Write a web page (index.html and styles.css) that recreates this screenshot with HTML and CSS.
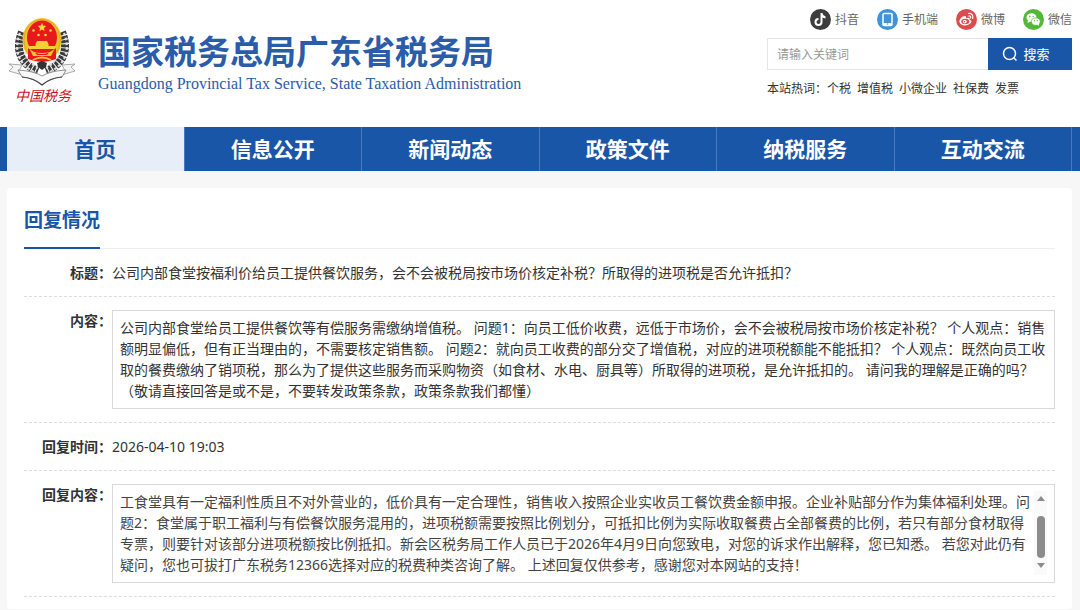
FILE: index.html
```html
<!DOCTYPE html>
<html lang="zh-CN">
<head>
<meta charset="utf-8">
<title>国家税务总局广东省税务局</title>
<link rel="stylesheet" href="styles.css">
</head>
<body>
<header class="header">
  <a class="brand" href="#">
    <span class="logo">
      <svg class="emblem" viewBox="0 0 70 70" aria-hidden="true">
        <g fill="none" stroke="#3a3a3a" stroke-width="8" stroke-dasharray="3.200 1">
          <path d="M14 15C7 32 12 47 30 54"/>
          <path d="M54 15C61 32 56 47 38 54"/>
        </g>
        <g fill="none" stroke="#dedede" stroke-width="2.200" stroke-dasharray="2.800 2">
          <path d="M12 16C5 34 11 48 28 56"/>
          <path d="M56 16C63 34 57 48 40 56"/>
          <path d="M16 30C17 40 22 46 30 51"/>
          <path d="M52 30C51 40 46 46 38 51"/>
        </g>
        <ellipse cx="34" cy="23" rx="19.500" ry="22" fill="#efc52b"/>
        <ellipse cx="34" cy="23" rx="18" ry="20.500" fill="none" stroke="#d99b1c" stroke-width=".7"/>
        <ellipse cx="34" cy="20.500" rx="15" ry="17" fill="#e8191c"/>
        <path d="M20 31h28v11q-14 6-28 0z" fill="#e8191c"/>
        <path d="M34 6l1.200 2.600 2.900.4-2.100 2 .5 2.900-2.500-1.400-2.500 1.400.5-2.900-2.100-2 2.900-.4z" fill="#ffd83b"/>
        <g fill="#ffd83b"><circle cx="25.500" cy="13.500" r="1.300"/><circle cx="42.500" cy="13.500" r="1.300"/><circle cx="30.500" cy="18" r="1.300"/><circle cx="37.500" cy="18" r="1.300"/></g>
        <path d="M29 24h10l1.500 3v2h7v3h-27v-3h7v-2z" fill="#f6cf35"/>
        <path d="M21 31q3 5 13 5t13-5l-4 8H25z" fill="#f3c52e"/>
        <path d="M27 35.500q7 3 14 0l-2 2.500H29z" fill="#e8191c"/>
        <path d="M25 43q9-5 18 0" fill="none" stroke="#f3c52e" stroke-width="2"/>
        <path d="M29 46l5-2 5 2-1 4-4 3-4-3z" fill="#333"/>
        <path d="M1 47l13 1-3 6 7 1v4L1 54l4-4zM67 47l-13 1 3 6-7 1v4l17-5-4-4z" fill="#f4f4f4" stroke="#888" stroke-width=".7"/>
        <path d="M10 53q16 1 24 6 8-5 24-6l-4 7q-12 1-20 8-8-7-20-8z" fill="#f8f8f8" stroke="#777" stroke-width=".8"/>
        <path d="M14 60q12 1 20 8 8-7 20-8" fill="none" stroke="#444" stroke-width="1.200"/>
      </svg>
      <span class="logo-text">中国税务</span>
    </span>
    <span class="brand-names">
      <span class="brand-cn">国家税务总局广东省税务局</span>
      <span class="brand-en">Guangdong Provincial Tax Service, State Taxation Administration</span>
    </span>
  </a>
  <div class="tools">
    <div class="social">
      <a href="#"><svg viewBox="0 0 21 21" aria-hidden="true"><circle cx="10.500" cy="10.500" r="10.500" fill="#3d3d3d"/><path d="M11.500 4v9a3 3 0 1 1-3-3M11.500 4.500q.5 3.500 4 4" fill="none" stroke="#fff" stroke-width="2"/></svg>抖音</a>
      <a href="#"><svg viewBox="0 0 21 21" aria-hidden="true"><circle cx="10.500" cy="10.500" r="10.500" fill="#3d94da"/><rect x="6" y="4.500" width="9" height="12" rx="1" fill="none" stroke="#fff" stroke-width="1.500"/><path d="M6 14h9v2.500H6z" fill="#fff"/><circle cx="10.500" cy="15" r=".7" fill="#3d94da"/></svg>手机端</a>
      <a href="#"><svg viewBox="0 0 21 21" aria-hidden="true"><circle cx="10.500" cy="10.500" r="10.500" fill="#dc4c4c"/><path d="M9 7C6 7 3 10.500 3.500 13c.5 3 5 4 8 3s4.500-3 3.500-4.500c-.4-.7-1.500-.8-1.500-.8s.5-1.700-.5-2-3 .5-3 .5S10.500 7 9 7z" fill="#fff"/><ellipse cx="9.300" cy="12.500" rx="4" ry="2.800" fill="#dc4c4c"/><circle cx="8.800" cy="12.600" r="1.900" fill="#fff"/><circle cx="8.500" cy="12.700" r=".8" fill="#dc4c4c"/><path d="M12.500 4.500c3-.6 5.200 2 4.200 5M12.800 7c1.400-.3 2.200.7 1.800 2" fill="none" stroke="#fff" stroke-width="1.200" stroke-linecap="round"/></svg>微博</a>
      <a href="#"><svg viewBox="0 0 21 21" aria-hidden="true"><circle cx="10.500" cy="10.500" r="10.500" fill="#54b837"/><ellipse cx="8.500" cy="8.500" rx="5" ry="4.200" fill="#fff"/><path d="M5 11l-.5 3 3-1.500z" fill="#fff"/><ellipse cx="12.800" cy="12.600" rx="4.400" ry="3.700" fill="#fff" stroke="#54b837" stroke-width=".7"/><path d="M14 15.500l2 1.500-.2-2.500z" fill="#fff"/><g fill="#54b837"><circle cx="6.800" cy="7.500" r=".7"/><circle cx="10.200" cy="7.500" r=".7"/><circle cx="11.400" cy="11.700" r=".6"/><circle cx="14.300" cy="11.700" r=".6"/></g></svg>微信</a>
    </div>
    <form class="search">
      <input type="text" placeholder="请输入关键词" aria-label="请输入关键词">
      <button type="button"><svg viewBox="0 0 16 16" aria-hidden="true"><circle cx="7.500" cy="7.500" r="6" fill="none" stroke="#fff" stroke-width="1.500"/><path d="M11.500 11.500l3 3" stroke="#fff" stroke-width="1.500"/></svg>搜索</button>
    </form>
    <div class="hot"><span>本站热词：<a href="#">个税</a></span><a href="#">增值税</a><a href="#">小微企业</a><a href="#">社保费</a><a href="#">发票</a></div>
  </div>
</header>
<nav class="nav">
  <a class="active" href="#">首页</a>
  <a href="#">信息公开</a>
  <a href="#">新闻动态</a>
  <a href="#">政策文件</a>
  <a href="#">纳税服务</a>
  <a href="#">互动交流</a>
</nav>
<main class="card">
  <div class="card-head"><h1>回复情况</h1></div>
  <dl class="details">
    <div class="row">
      <dt>标题：</dt>
      <dd>公司内部食堂按福利价给员工提供餐饮服务，会不会被税局按市场价核定补税？所取得的进项税是否允许抵扣？</dd>
    </div>
    <div class="row">
      <dt>内容：</dt>
      <dd class="box">公司内部食堂给员工提供餐饮等有偿服务需缴纳增值税。 问题1：向员工低价收费，远低于市场价，会不会被税局按市场价核定补税？ 个人观点：销售额明显偏低，但有正当理由的，不需要核定销售额。 问题2：就向员工收费的部分交了增值税，对应的进项税额能不能抵扣？ 个人观点：既然向员工收取的餐费缴纳了销项税，那么为了提供这些服务而采购物资（如食材、水电、厨具等）所取得的进项税，是允许抵扣的。 请问我的理解是正确的吗？（敬请直接回答是或不是，不要转发政策条款，政策条款我们都懂）</dd>
    </div>
    <div class="row">
      <dt>回复时间：</dt>
      <dd>2026-04-10 19:03</dd>
    </div>
    <div class="row">
      <dt>回复内容：</dt>
      <dd class="box scroll-box">
        <p>工食堂具有一定福利性质且不对外营业的，低价具有一定合理性，销售收入按照企业实收员工餐饮费金额申报。企业补贴部分作为集体福利处理。问题2：食堂属于职工福利与有偿餐饮服务混用的，进项税额需要按照比例划分，可抵扣比例为实际收取餐费占全部餐费的比例，若只有部分食材取得专票，则要针对该部分进项税额按比例抵扣。新会区税务局工作人员已于2026年4月9日向您致电，对您的诉求作出解释，您已知悉。 若您对此仍有疑问，您也可拔打广东税务12366选择对应的税费种类咨询了解。 上述回复仅供参考，感谢您对本网站的支持！</p>
        <span class="scrollbar" aria-hidden="true"><i class="up"></i><i class="thumb"></i><i class="down"></i></span>
      </dd>
    </div>
  </dl>
</main>
</body>
</html>
```
FILE: styles.css
```css
* { box-sizing: border-box; }
body {
  margin: 0;
  background: #f7f7f7;
  color: #333;
  font: 14px/21px "Noto Sans", "Noto Sans CJK SC", sans-serif;
  text-spacing-trim: space-all;
}
a { color: inherit; text-decoration: none; }
.header {
  display: flex;
  justify-content: space-between;
  padding: 8px 8px 0;
  height: 127px;
  background: #fff;
}
.brand { display: flex; gap: 20px; color: #2a5caa; }
.logo { display: flex; flex-direction: column; align-items: center; padding-top: 9px; width: 70px; }
.emblem { width: 70px; height: 70px; }
.logo-text {
  color: #c8161d;
  font: italic 14px/20px "Liberation Serif", "Noto Sans CJK SC", serif;
}
.brand-names { display: flex; flex-direction: column; padding-top: 22px; }
.brand-cn { font-size: 33px; line-height: 43px; font-weight: 700; }
.brand-en { font: 16px/22px "Liberation Serif", serif; }
.tools { width: 305px; font-size: 12px; }
.social { display: flex; justify-content: flex-end; gap: 18px; padding-top: 1px; color: #666; }
.social a { display: flex; align-items: center; gap: 4px; height: 21px; }
.social svg { width: 21px; height: 21px; }
.search { display: flex; height: 32px; margin-top: 8px; }
.search input {
  flex: 1;
  min-width: 0;
  padding: 0 9px;
  border: 1px solid #e5e5e5;
  border-right: 0;
  border-radius: 0;
  font: inherit;
}
.search input::placeholder { color: #999; }
.search button {
  display: flex;
  align-items: center;
  justify-content: center;
  gap: 5px;
  width: 84px;
  padding: 0 8px 0 0;
  border: 0;
  background: #1a56a8;
  color: #fff;
  font: 13px/20px "Noto Sans", "Noto Sans CJK SC", sans-serif;
}
.search button svg { width: 16px; height: 16px; }
.hot { display: flex; gap: 6px; margin-top: 8px; }
.nav { display: flex; padding: 0 8px 0 7px; background: #1a56a8; }
.nav a {
  flex: 1;
  border-right: 1px solid #4a79bb;
  color: #fff;
  font-size: 21px;
  font-weight: 700;
  line-height: 44px;
  text-align: center;
}
.nav .active { background: #e8eef8; color: #1a56a8; }
.card { margin: 17px 8px 0 7px; padding: 0 17px 12px; border-radius: 4px; background: #fff; }
.card-head { display: flex; border-bottom: 1px solid #eee; }
.card-head h1 {
  margin: 0 0 -1px;
  padding-top: 11px;
  height: 61px;
  border-bottom: 2px solid #1a56a8;
  color: #1a56a8;
  font-size: 19px;
  line-height: 42px;
}
.details { margin: 0; }
.row { display: flex; padding: 13px 0; border-bottom: 1px dashed #ddd; }
.row dt { width: 88px; flex: none; font-weight: 700; text-align: right; }
.row dd { flex: 1; margin: 0; }
.row dd.box { padding: 6px 7px 7px; border: 1px solid #d9d9d9; }
.row dd.scroll-box { display: flex; gap: 3px; color: #444; }
.scroll-box p { flex: 1; margin: 0; }
.scrollbar {
  display: flex;
  flex-direction: column;
  align-items: center;
  width: 13px;
  padding: 5px 0;
  background: #fafafa;
}
.up, .down { border: 4px solid transparent; }
.up { border-top: 0; border-bottom: 5px solid #8b8b8b; }
.down { border-bottom: 0; border-top: 5px solid #8b8b8b; }
.thumb { width: 8px; height: 42px; margin: 15px 0 5px; border-radius: 4px; background: #8b8b8b; }
```
